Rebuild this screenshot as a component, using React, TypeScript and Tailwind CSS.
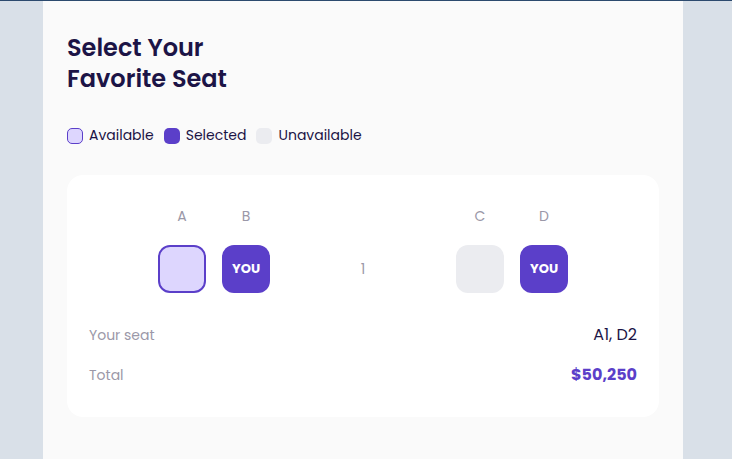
export default function App() {
  return (
    <div
      className="min-h-[459px] bg-[#d9e0e8] border-t border-[#2c4a6e] flex"
      style={{ fontFamily: "Poppins, Inter, 'Noto Sans', sans-serif" }}
    >
      <div className="ml-[43px] w-[640px] bg-[#fafafa] px-6 pt-[31px] pb-10">
        <h1 className="text-[24px] leading-[31px] font-semibold text-[#1c1446]">
          Select Your
          <br />
          Favorite Seat
        </h1>

        <div className="mt-[31px] flex items-center text-[14px] text-[#1c1446]">
          <span className="w-4 h-4 rounded-[5px] bg-[#ddd6fe] border border-[#5b3fc9]" />
          <span className="ml-[6px]">Available</span>
          <span className="ml-[10px] w-4 h-4 rounded-[5px] bg-[#5b3fc9]" />
          <span className="ml-[6px]">Selected</span>
          <span className="ml-[10px] w-4 h-4 rounded-[5px] bg-[#ebecf0]" />
          <span className="ml-[6px]">Unavailable</span>
        </div>

        <div className="mt-[29px] bg-white rounded-2xl px-[22px] pt-[31px] pb-[30px]">
          <div className="flex justify-center text-[14px] text-[#9b98a8]">
            <div className="w-12 text-center">A</div>
            <div className="w-12 ml-4 text-center">B</div>
            <div className="w-[186px]" />
            <div className="w-12 text-center">C</div>
            <div className="w-12 ml-4 text-center">D</div>
          </div>

          <div className="mt-[18px] flex justify-center items-center">
            <div className="w-12 h-12 rounded-[12px] bg-[#ddd6fe] border-2 border-[#5b3fc9]" />
            <div className="w-12 h-12 ml-4 rounded-[12px] bg-[#5b3fc9] flex items-center justify-center text-white text-[13px] font-bold">
              YOU
            </div>
            <div className="w-[186px] text-center text-[14px] text-[#9b98a8]">1</div>
            <div className="w-12 h-12 rounded-[12px] bg-[#ebecf0]" />
            <div className="w-12 h-12 ml-4 rounded-[12px] bg-[#5b3fc9] flex items-center justify-center text-white text-[13px] font-bold">
              YOU
            </div>
          </div>

          <div className="mt-[30px] flex justify-between items-center">
            <span className="text-[14px] text-[#9b98a8]">Your seat</span>
            <span className="text-[16px] text-[#1c1446]">A1, D2</span>
          </div>
          <div className="mt-[16px] flex justify-between items-center">
            <span className="text-[14px] text-[#9b98a8]">Total</span>
            <span className="text-[16px] font-bold text-[#5b3fc9]">$50,250</span>
          </div>
        </div>
      </div>
    </div>
  );
}
